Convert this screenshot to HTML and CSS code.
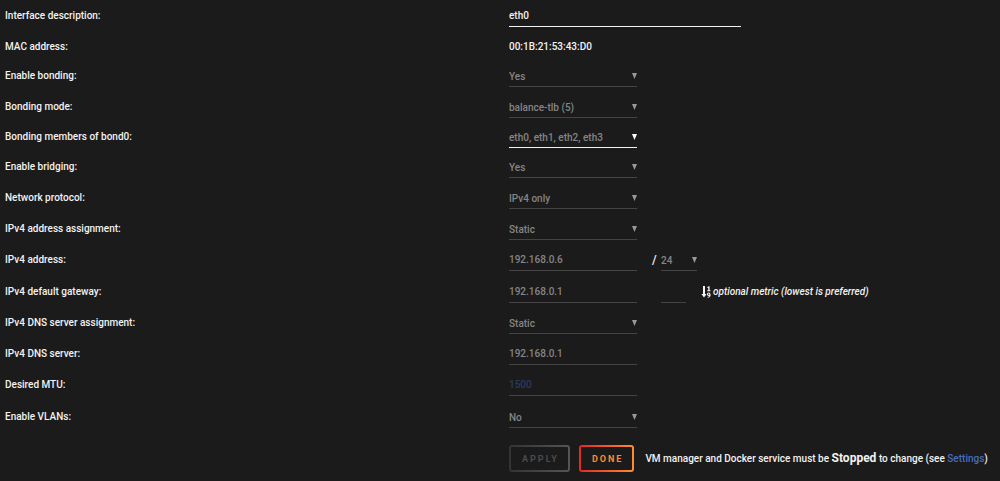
FILE: index.html
```
<!DOCTYPE html>
<html lang="en">
<head>
    <meta charset="UTF-8">
    <meta name="viewport" content="width=device-width, initial-scale=1">
    <title>Network Settings</title>
    <link rel="stylesheet" href="styles.css">
</head>
<body>
    <form class="settings">
        <div class="row">
            <label for="descr">Interface description:</label>
            <div class="value"><input class="field wide" type="text" id="descr" value="eth0"></div>
        </div>
        <div class="row short">
            <span class="label">MAC address:</span>
            <div class="value"><span class="mac">00:1B:21:53:43:D0</span></div>
        </div>
        <div class="row">
            <label for="bonding">Enable bonding:</label>
            <div class="value"><select class="field" id="bonding" disabled><option>Yes</option></select></div>
        </div>
        <div class="row compact">
            <label for="mode">Bonding mode:</label>
            <div class="value"><select class="field" id="mode" disabled><option>balance-tlb (5)</option></select></div>
        </div>
        <div class="row compact">
            <label for="members">Bonding members of bond0:</label>
            <div class="value"><select class="field members" id="members"><option>eth0, eth1, eth2, eth3</option></select></div>
        </div>
        <div class="row">
            <label for="bridging">Enable bridging:</label>
            <div class="value"><select class="field" id="bridging" disabled><option>Yes</option></select></div>
        </div>
        <div class="row">
            <label for="protocol">Network protocol:</label>
            <div class="value"><select class="field" id="protocol" disabled><option>IPv4 only</option></select></div>
        </div>
        <div class="row">
            <label for="assignment">IPv4 address assignment:</label>
            <div class="value"><select class="field" id="assignment" disabled><option>Static</option></select></div>
        </div>
        <div class="row tall">
            <label for="address">IPv4 address:</label>
            <div class="value">
                <input class="field" type="text" id="address" value="192.168.0.6" disabled>
                <label class="slash" for="mask">/</label>
                <select class="field mask" id="mask" disabled><option>24</option></select>
            </div>
        </div>
        <div class="row">
            <label for="gateway">IPv4 default gateway:</label>
            <div class="value">
                <input class="field" type="text" id="gateway" value="192.168.0.1" disabled>
                <input class="field metric" type="text" id="metric" disabled>
                <label class="hint" for="metric">
                    <svg class="sort" viewBox="0 0 10 12" aria-hidden="true">
                        <path d="M2 0h2v8h1.600L3 11.500.400 8H2z"/>
                        <path d="M6.200 1.200 7.700.300h.900v4h.900v1H6.200v-1h1V1.700l-1 .300z"/>
                        <path fill-rule="evenodd" d="M7.700 6.500c1.200 0 1.900.900 1.900 2.400 0 1.800-1 2.800-3 2.800v-.900c1 0 1.600-.300 1.800-.900-1.300.400-2.400-.300-2.400-1.600 0-1.100.700-1.800 1.700-1.800zm0 .900c-.400 0-.700.300-.700.800s.300.800.700.800.700-.300.700-.800-.300-.800-.700-.800z"/>
                    </svg>
                    <i>optional metric (lowest is preferred)</i>
                </label>
            </div>
        </div>
        <div class="row">
            <label for="dns-assignment">IPv4 DNS server assignment:</label>
            <div class="value"><select class="field" id="dns-assignment" disabled><option>Static</option></select></div>
        </div>
        <div class="row">
            <label for="dns">IPv4 DNS server:</label>
            <div class="value"><input class="field" type="text" id="dns" value="192.168.0.1" disabled></div>
        </div>
        <div class="row tall">
            <label for="mtu">Desired MTU:</label>
            <div class="value"><input class="field" type="text" id="mtu" placeholder="1500" disabled></div>
        </div>
        <div class="row">
            <label for="vlans">Enable VLANs:</label>
            <div class="value"><select class="field" id="vlans" disabled><option>No</option></select></div>
        </div>
        <div class="row actions">
            <span></span>
            <div class="value">
                <button type="submit" disabled>Apply</button>
                <button type="button">Done</button>
                <span class="note">VM manager and Docker service must be <b>Stopped</b> to change (see <a href="#">Settings</a>)</span>
            </div>
        </div>
    </form>
</body>
</html>
```
FILE: styles.css
```
* {
    box-sizing: border-box;
}

body {
    margin: 0;
    background-color: #1c1b1b;
    color: #f2f2f2;
    font-family: Roboto, "Noto Sans", sans-serif;
    font-size: 10px;
    font-weight: 500;
    line-height: 22px;
}

.settings {
    padding: 5px 5px 8px;
}

.row {
    display: grid;
    grid-template-columns: minmax(0, 1fr) minmax(0, 1fr);
    column-gap: 18px;
    align-items: start;
    min-height: 31px;
}

.row.short {
    min-height: 29px;
}

.row.compact {
    min-height: 30px;
}

.row.tall {
    min-height: 32px;
}

.value {
    display: flex;
    align-items: flex-start;
    white-space: nowrap;
}

/* inputs and selects share the underlined look */
.field {
    appearance: none;
    width: 128px;
    height: 22px;
    margin: 0;
    padding: 0;
    border: 0;
    border-bottom: 1px solid #f2f2f2;
    border-radius: 0;
    outline: 0;
    background-color: transparent;
    color: #f2f2f2;
    font: inherit;
}

.field.wide {
    width: 232px;
}

.field:disabled {
    border-bottom-color: #444;
    color: #858585;
    opacity: 1;
}

.field::placeholder {
    color: #2b3a61;
}

select.field {
    padding-top: 1px;
    background: url("data:image/svg+xml,%3Csvg xmlns='http://www.w3.org/2000/svg' width='5' height='6'%3E%3Cpath d='M0 0h5L2.5 6z' fill='%23fff'/%3E%3C/svg%3E") no-repeat right 8px;
}

select.field:disabled {
    background-image: url("data:image/svg+xml,%3Csvg xmlns='http://www.w3.org/2000/svg' width='5' height='6'%3E%3Cpath d='M0 0h5L2.5 6z' fill='%23999'/%3E%3C/svg%3E");
}

select.members {
    color: #858585;
}

.slash {
    width: 9px;
    margin-left: 15px;
    font-size: 12px;
}

.field.mask {
    width: 36px;
}

.field.metric {
    width: 25px;
    margin-left: 24px;
}

.hint {
    display: flex;
    align-items: center;
    gap: 2px;
    margin-left: 15px;
}

.sort {
    width: 10px;
    height: 12px;
    fill: #f2f2f2;
}

.actions {
    padding-top: 8px;
}

.actions .value {
    align-items: center;
}

button {
    height: 27px;
    margin: 0 9px 0 0;
    padding: 0 9px 0 11px;
    border: 2px solid transparent;
    border-radius: 3px;
    background: linear-gradient(#1c1b1b, #1c1b1b) padding-box, linear-gradient(90deg, #e22828, #ff8c2f) border-box;
    color: #ff8c2f;
    font: inherit;
    font-size: 9px;
    font-weight: 700;
    letter-spacing: 2px;
    text-transform: uppercase;
}

button:disabled {
    background: linear-gradient(#1c1b1b, #1c1b1b) padding-box, linear-gradient(90deg, #333, #555) border-box;
    color: #4a4a4a;
}

.note {
    margin-left: 2px;
}

.note b {
    font-size: 12px;
}

a {
    color: #486dba;
    text-decoration: none;
}
```
